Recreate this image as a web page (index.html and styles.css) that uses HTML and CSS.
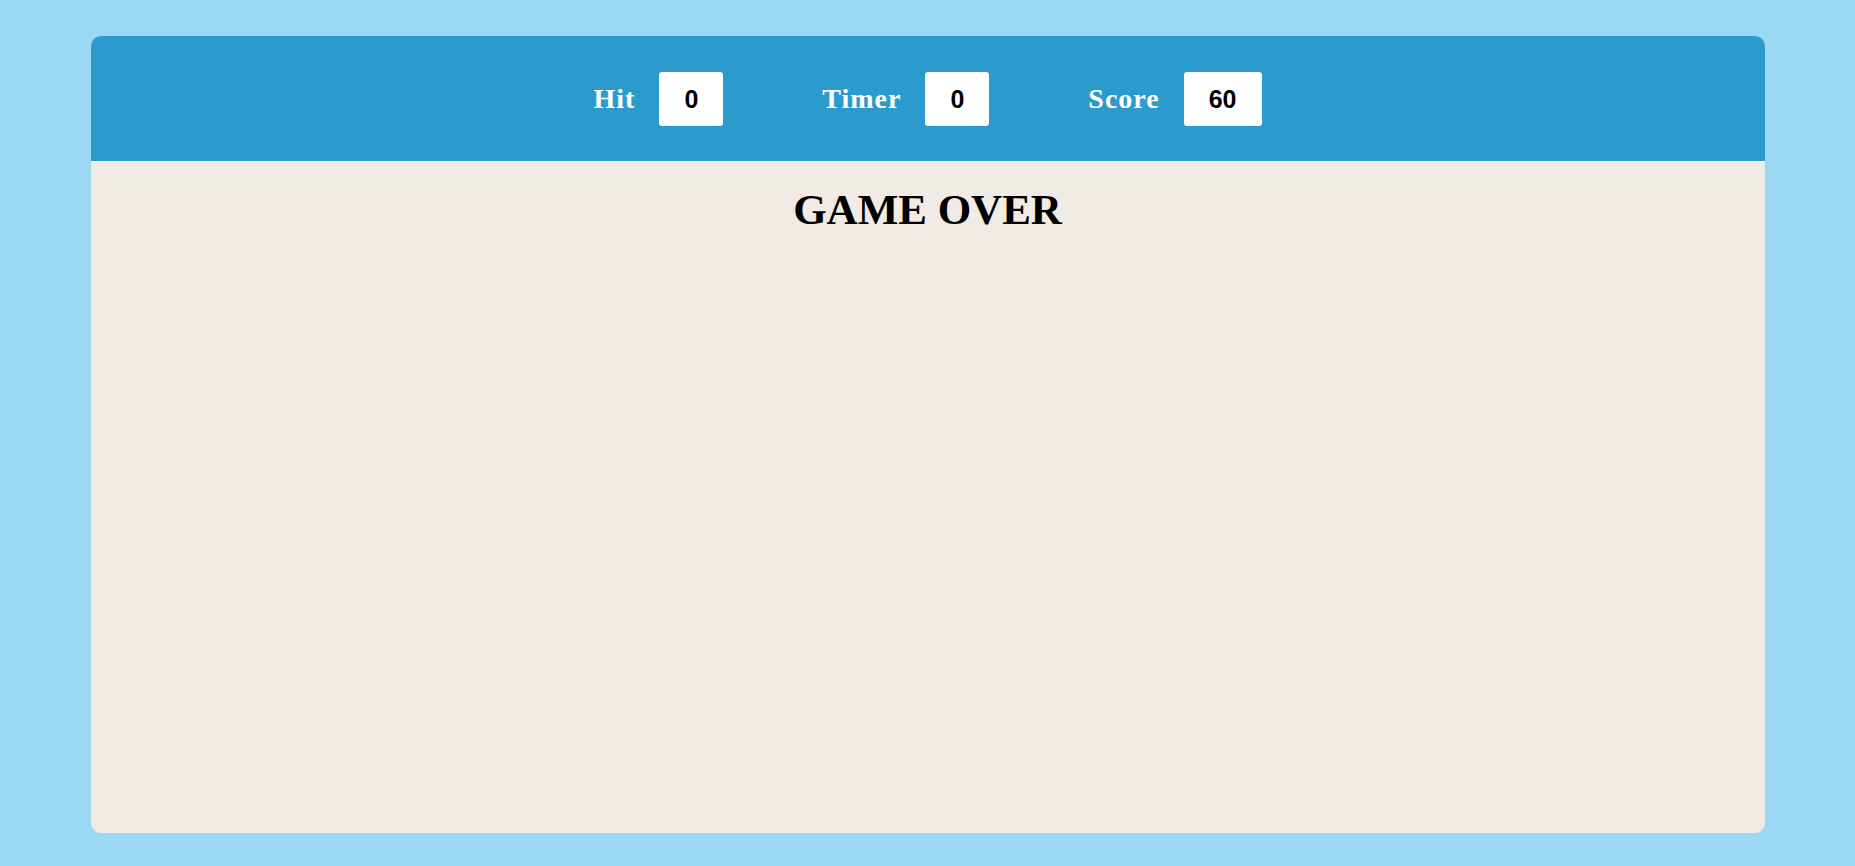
FILE: index.html
```html
<!DOCTYPE html>
<html lang="en">
<head>
<meta charset="utf-8">
<title>Bubble Game</title>
<link rel="stylesheet" href="styles.css">
</head>
<body>
<main class="game">
  <header class="panel-top">
    <div class="stat">
      <span class="stat-label">Hit</span>
      <span class="stat-box">0</span>
    </div>
    <div class="stat">
      <span class="stat-label">Timer</span>
      <span class="stat-box">0</span>
    </div>
    <div class="stat">
      <span class="stat-label">Score</span>
      <span class="stat-box">60</span>
    </div>
  </header>
  <section class="panel-bottom">
    <h1 class="game-over">GAME OVER</h1>
  </section>
</main>
</body>
</html>
```

FILE: styles.css
```css
* {
  box-sizing: border-box;
}

html, body {
  margin: 0;
  padding: 0;
}

body {
  width: 100vw;
  height: 100vh;
  background: #9bd8f4;
  display: flex;
  align-items: center;
  justify-content: center;
  font-family: "Liberation Serif", "Times New Roman", serif;
  overflow: hidden;
}

.game {
  width: 1674px;
  height: 797px;
  margin-top: 2px;
  border-radius: 10px;
  overflow: hidden;
  background: #f0ebe5;
  display: flex;
  flex-direction: column;
}

.panel-top {
  height: 125px;
  flex-shrink: 0;
  background: #2a9bcc;
  display: flex;
  align-items: center;
  justify-content: center;
  gap: 99px;
  padding-top: 2px;
}

.stat {
  display: flex;
  align-items: center;
  gap: 24px;
}

.stat-label {
  color: #ffffff;
  font-weight: bold;
  font-size: 28px;
  letter-spacing: 1px;
}

.stat-box {
  background: #ffffff;
  border-radius: 3px;
  padding: 12px 25px;
  line-height: 30px;
  font-family: "Liberation Sans", Arial, sans-serif;
  font-weight: bold;
  font-size: 25px;
  color: #000000;
}

.panel-bottom {
  flex: 1;
  display: flex;
  flex-direction: column;
  align-items: center;
  padding-top: 24px;
}

.game-over {
  margin: 0;
  font-size: 43px;
  font-weight: bold;
  color: #000000;
}
```
